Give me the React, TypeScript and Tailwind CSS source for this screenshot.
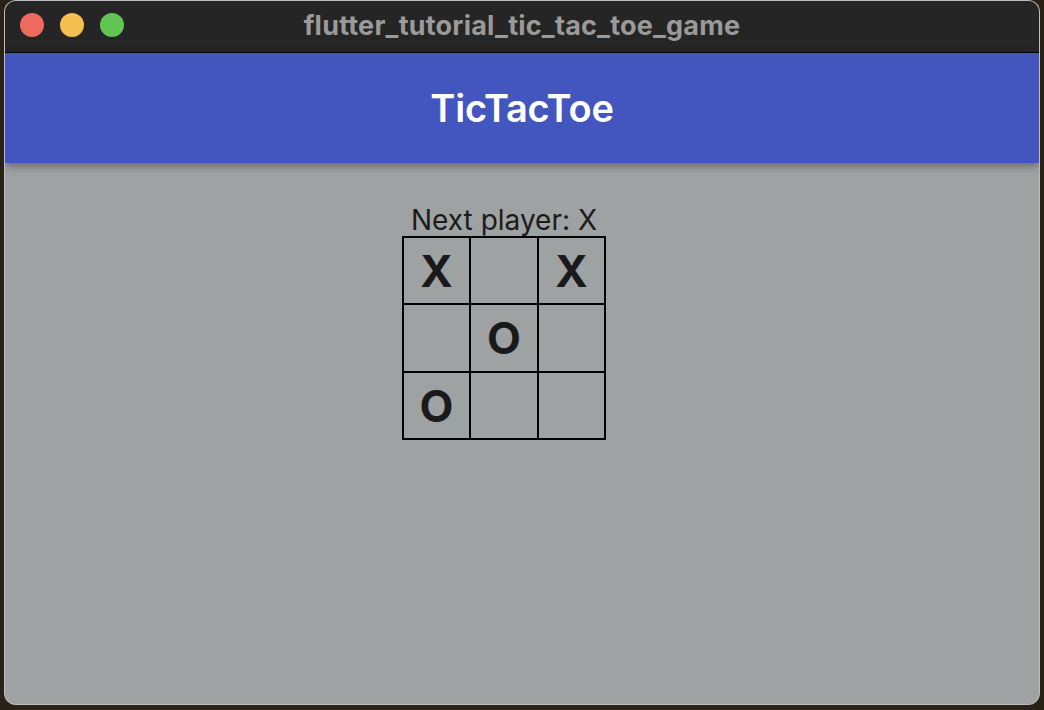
import React from 'react';

const BOARD: string[] = ['X', '', 'X', '', 'O', '', 'O', '', ''];

function TrafficLights() {
  return (
    <div className="absolute left-[15px] top-[12px] flex gap-[16px]">
      <span className="w-[24px] h-[24px] rounded-full bg-[#ee6a5f]" />
      <span className="w-[24px] h-[24px] rounded-full bg-[#f5bf4f]" />
      <span className="w-[24px] h-[24px] rounded-full bg-[#61c554]" />
    </div>
  );
}

export default function App() {
  return (
    <div className="w-[1044px] h-[710px] bg-[#2a2117] px-[4px] pb-[5px] font-['Inter',sans-serif]">
      <div className="w-full h-full rounded-[12px] overflow-hidden border border-white/30 bg-[#9ea2a3] flex flex-col">
        {/* title bar */}
        <div className="relative h-[52px] shrink-0 bg-[#252525] border-b border-black flex items-center justify-center">
          <TrafficLights />
          <span className="text-[27px] font-bold text-[#9a9a9a] tracking-[0.2px]">
            flutter_tutorial_tic_tac_toe_game
          </span>
        </div>

        {/* app bar */}
        <div className="h-[110px] shrink-0 bg-[#4355be] flex items-center justify-center shadow-[0_3px_8px_rgba(0,0,0,0.35)] relative z-10">
          <h1 className="text-[38px] font-semibold text-white tracking-[-0.2px]">TicTacToe</h1>
        </div>

        {/* body */}
        <div className="flex-1 flex flex-col items-center pt-[41px] pr-[36px]">
          <div className="text-[28px] leading-[32px] text-[#1b1b1b]">Next player: X</div>
          <div className="grid grid-cols-[65px_66px_65px] grid-rows-[65px_66px_65px] gap-[2px] p-[2px] bg-black">
            {BOARD.map((v, i) => (
              <div
                key={i}
                className="bg-[#9ea2a3] flex items-center justify-center text-[44px] font-bold text-[#1a1a1a]"
              >
                {v}
              </div>
            ))}
          </div>
        </div>
      </div>
    </div>
  );
}
